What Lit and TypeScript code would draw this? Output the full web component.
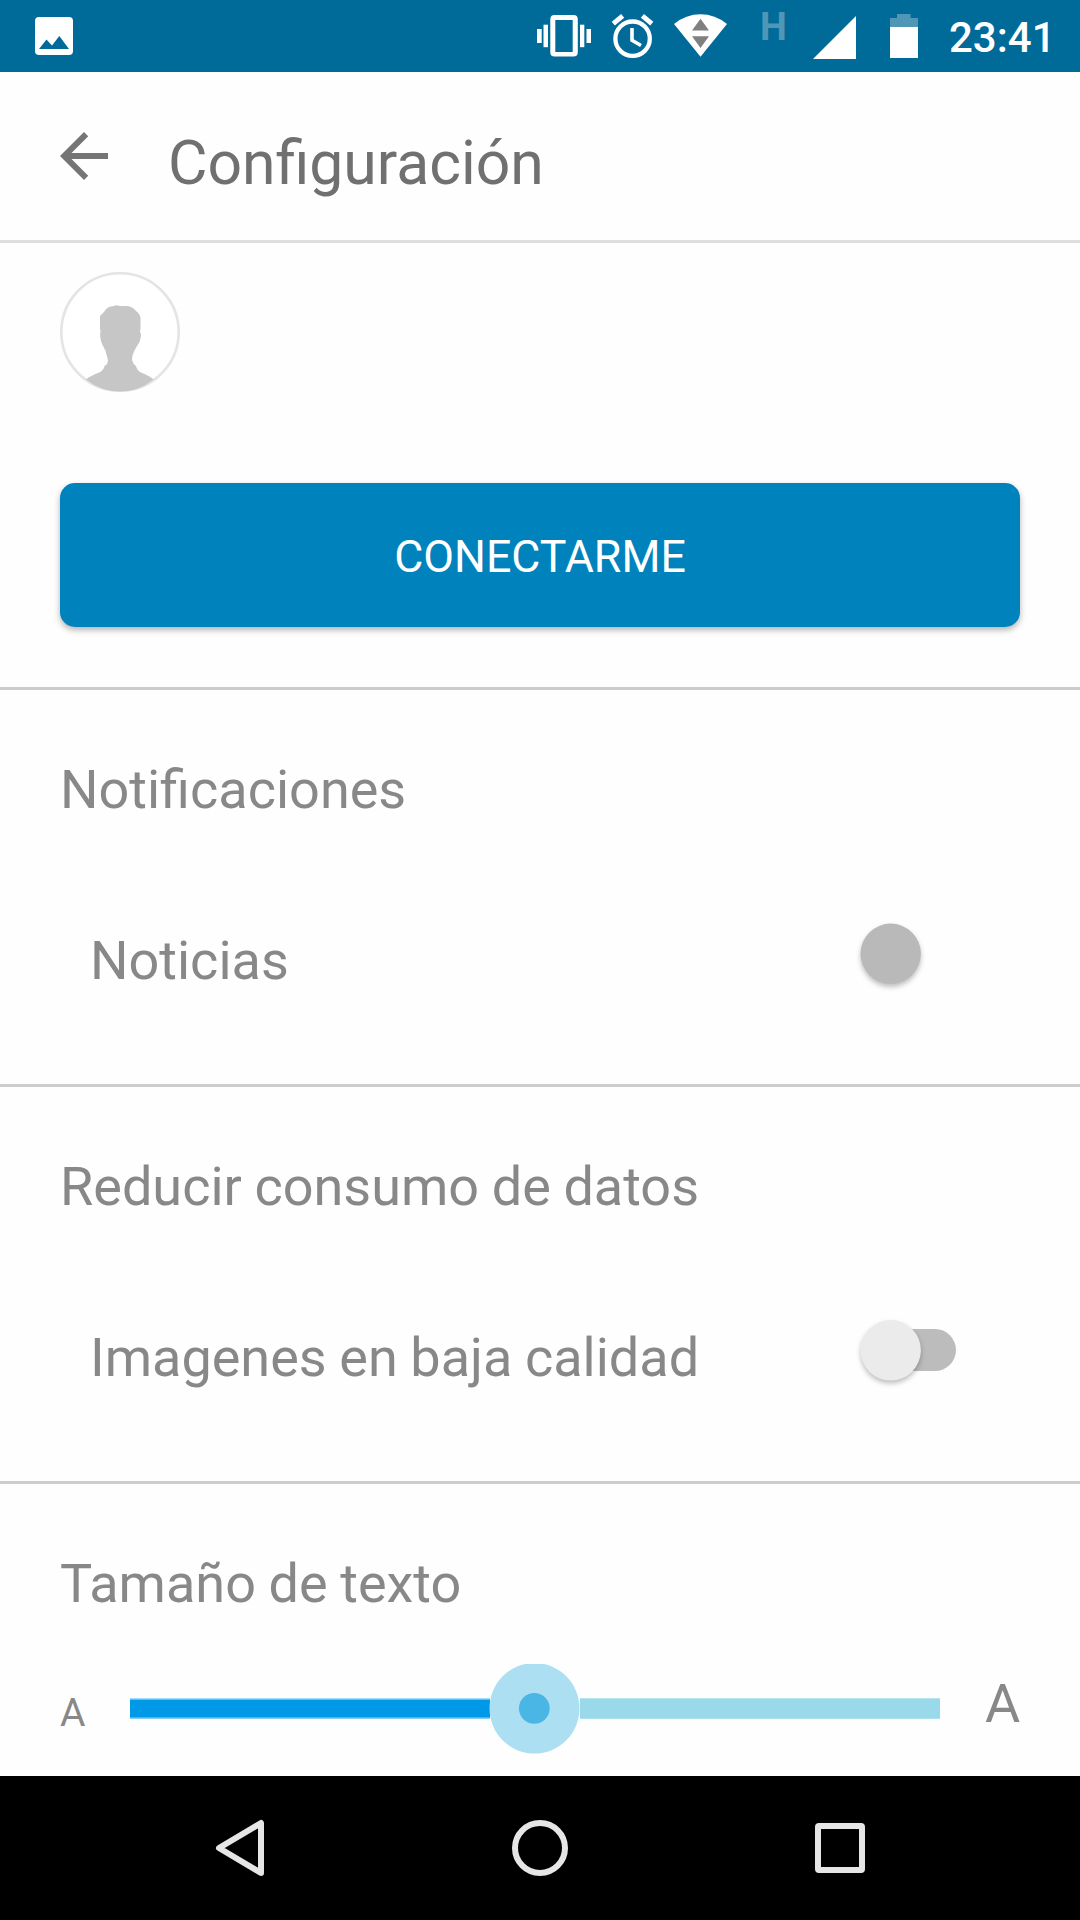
import { LitElement, html, css, svg } from "lit";
import { customElement, property } from "lit/decorators.js";

@customElement("status-bar")
class StatusBar extends LitElement {
  static styles = css`
    :host { display: flex; height: 72px; background: #006a99; align-items: flex-start; justify-content: space-between; color: #fff; }
    svg { display: block; }
    .left { margin-left: 35px; margin-top: 17px; }
    .right { display: flex; align-items: flex-start; height: 72px; }
    .icon { flex: none; }
    .vibrate { margin-right: 20px; }
    .alarm { margin-right: 19px; }
    .wifi { margin-right: 33px; }
    .net { width: 27px; font: 700 38px/38px Roboto, sans-serif; color: #5097b7; margin: 8px 26px 0 0; }
    .signal { margin-right: 34px; }
    .battery { margin-right: 31px; }
    .time { width: 131px; box-sizing: border-box; font: 500 42px/72px Roboto, sans-serif; white-space: nowrap; padding-top: 2px; }
  `;
  render() {
    return html`
      <svg class="left" width="38" height="38" viewBox="0 0 38 38">
        <rect width="38" height="38" rx="4" fill="#fff" />
        <path fill="#006a99" d="M4 32L11.5 22.5L17 28.5L24.3 19L34 32z" />
      </svg>
      <div class="right">
        <svg class="icon vibrate" width="54" height="72" viewBox="537 0 54 72" fill="#fff">
          <path fill-rule="evenodd" d="M554.5 15h19q4.3 0 4.3 4.3v33q0 4.3-4.3 4.3h-19q-4.2 0-4.2-4.3v-33q0-4.3 4.2-4.3zM555.3 20v32h17.4V20z" />
          <rect x="543.5" y="24.7" width="4.5" height="22.5" /><rect x="537" y="29" width="4.7" height="14" />
          <rect x="580" y="24.7" width="4.3" height="22.5" /><rect x="586.5" y="29" width="4.5" height="14" />
        </svg>
        <svg class="icon alarm" width="44" height="72" viewBox="611 0 44 72" fill="none" stroke="#fff">
          <circle cx="632.6" cy="38.7" r="17.2" stroke-width="4.3" />
          <path stroke-width="3.6" d="M632 28v12.3l9 5.2" />
          <path stroke-width="4.8" d="M613.3 23.7l9.4-7.9M642.4 15.8l9.4 7.9" />
        </svg>
        <svg class="icon wifi" width="53" height="72" viewBox="674 0 53 72">
          <path fill="#fff" d="M674 24Q686 14.3 700.5 14.3T727 24L700.5 56.7z" />
          <path fill="#808080" d="M692 30.6h17L700.5 18.8zM692 36.2h17L700.5 48z" />
        </svg>
        <div class="net">H</div>
        <svg class="icon signal" width="43" height="72" viewBox="813 0 43 72">
          <path fill="#fff" d="M813 59h43V16z" />
        </svg>
        <svg class="icon battery" width="28" height="72" viewBox="890 0 28 72">
          <path fill="#5097b7" d="M890 28V18h7v-4h13.6v4H918v10z" />
          <rect x="890" y="27" width="28" height="31" fill="#fff" />
        </svg>
        <div class="time">23:41</div>
      </div>`;
  }
}

@customElement("toggle-switch")
class ToggleSwitch extends LitElement {
  @property({ type: Boolean }) solid = false;
  static styles = css`
    :host { display: block; width: 96px; height: 61px; }
    svg { display: block; overflow: visible; }
    .knob { filter: drop-shadow(0 3px 2.5px rgba(0, 0, 0, 0.25)); }
  `;
  render() {
    return html`<svg width="96" height="61" viewBox="0 0 96 61">
      ${this.solid ? null : svg`<rect x="10" y="9" width="86" height="42" rx="21" fill="#bcbcbc" />`}
      <circle class="knob" cx="30.7" cy=${this.solid ? 30.8 : 30.3} r="30.2" fill=${this.solid ? "#b9b9b9" : "#ebebeb"} />
    </svg>`;
  }
}

@customElement("text-size-slider")
class TextSizeSlider extends LitElement {
  static styles = css`
    :host { display: flex; align-items: center; height: 90px; padding-left: 60px; color: #888; font-family: Roboto, sans-serif; }
    .small { width: 70px; font-size: 39px; line-height: 46px; padding-top: 7px; }
    .large { font-size: 54px; line-height: 64px; margin-left: 45px; margin-top: -11px; }
    svg { display: block; flex: none; }
  `;
  render() {
    return html`
      <span class="small">A</span>
      <svg width="810" height="90" viewBox="130 1664 810 90">
        <rect x="130" y="1698.4" width="360" height="20.4" fill="#66c1ee" />
        <rect x="130" y="1700" width="360" height="17.3" fill="#0099e8" />
        <rect x="580" y="1698.3" width="360" height="20.5" fill="#9ad9e9" />
        <ellipse cx="534.5" cy="1708.3" rx="45" ry="45.3" fill="#acdff2" />
        <circle cx="534.3" cy="1708.3" r="15.4" fill="#4ab6e6" />
      </svg>
      <span class="large">A</span>`;
  }
}

@customElement("app-root")
class AppRoot extends LitElement {
  static styles = css`
    :host { display: flex; flex-direction: column; width: 1080px; height: 1920px; overflow: hidden; background: #fefefe; font-family: Roboto, sans-serif; color: #888; }
    status-bar { flex: none; }
    svg { display: block; }
    .toolbar { box-sizing: border-box; height: 171px; flex: none; border-bottom: 3px solid #dedede; display: flex; padding-left: 48px; color: #707070; }
    .back { margin-top: 48px; }
    .title { margin: 56px 0 0 48px; font-size: 60.7px; line-height: 71px; font-weight: 400; }
    .account { box-sizing: border-box; height: 447px; flex: none; border-bottom: 3px solid #ccc; padding: 29px 60px 0; }
    .login { display: block; width: 960px; height: 144px; margin-top: 91px; border: 0; border-radius: 15px; background: #0083bd; color: #fff; font: 400 44.7px/140px Roboto, sans-serif; padding: 4px 0 0; box-shadow: 0 3px 6px rgba(0, 0, 0, 0.3); }
    .section { box-sizing: border-box; height: 397px; flex: none; border-bottom: 3px solid #ccc; }
    .section.last { height: 180px; border: 0; }
    .heading { margin: 0; padding: 68px 0 0 60px; font-size: 54px; line-height: 64px; font-weight: 400; word-spacing: -0.8px; }
    .row { display: flex; justify-content: space-between; align-items: center; height: 64px; padding: 0 124px 0 90px; margin-top: 107px; font-size: 54px; line-height: 64px; word-spacing: -0.8px; }
    toggle-switch { margin-top: -16px; }
    .nav { flex: none; height: 144px; margin-top: 22px; background: #000; display: flex; justify-content: center; align-items: center; }
    .nav-icons { overflow: visible; }
  `;
  render() {
    return html`
      <status-bar></status-bar>
      <header class="toolbar">
        <svg class="back" width="72" height="72" viewBox="0 0 24 24"><path fill="#757575" d="M20 11H7.83l5.59-5.59L12 4l-8 8 8 8 1.41-1.41L7.83 13H20v-2z" /></svg>
        <h1 class="title">Configuración</h1>
      </header>
      <section class="account">
        <svg width="120" height="120" viewBox="0 0 120 120">
          <circle cx="60" cy="60" r="58.7" fill="#fff" stroke="#e4e4e4" stroke-width="2.6" />
          <path fill="#c6c6c6" d="M26 107.500Q30 104 38 101Q44 98.500 44.500 94Q49 92 47.500 86Q46.500 79 42.500 73Q40 68 40 62Q41 60 40 56V44Q42 42 44 40Q47 34 54 34Q56 32.500 60 34H66Q72 34 76 39Q80 42 80.500 46V56Q79.500 60 81 62Q81 69 77 74Q72 82 72 88Q73 92 76 94Q77 99 82 101Q90 104 93.500 107.500Q79 119.500 60 119.500Q41 119.500 26 107.500z" />
        </svg>
        <button class="login">CONECTARME</button>
      </section>
      <section class="section">
        <h2 class="heading">Notificaciones</h2>
        <div class="row"><span>Noticias</span><toggle-switch solid></toggle-switch></div>
      </section>
      <section class="section">
        <h2 class="heading">Reducir consumo de datos</h2>
        <div class="row"><span>Imagenes en baja calidad</span><toggle-switch></toggle-switch></div>
      </section>
      <section class="section last">
        <h2 class="heading">Tamaño de texto</h2>
      </section>
      <text-size-slider></text-size-slider>
      <nav class="nav">
        <svg class="nav-icons" width="648" height="56" viewBox="216 1820 648 56" fill="none" stroke="#e6e6e6" stroke-width="6">
          <path stroke-linejoin="round" d="M219 1848L261 1823V1873z" />
          <circle cx="540" cy="1848" r="25" />
          <rect x="818" y="1826" width="44" height="44" rx="1" />
        </svg>
      </nav>`;
  }
}
